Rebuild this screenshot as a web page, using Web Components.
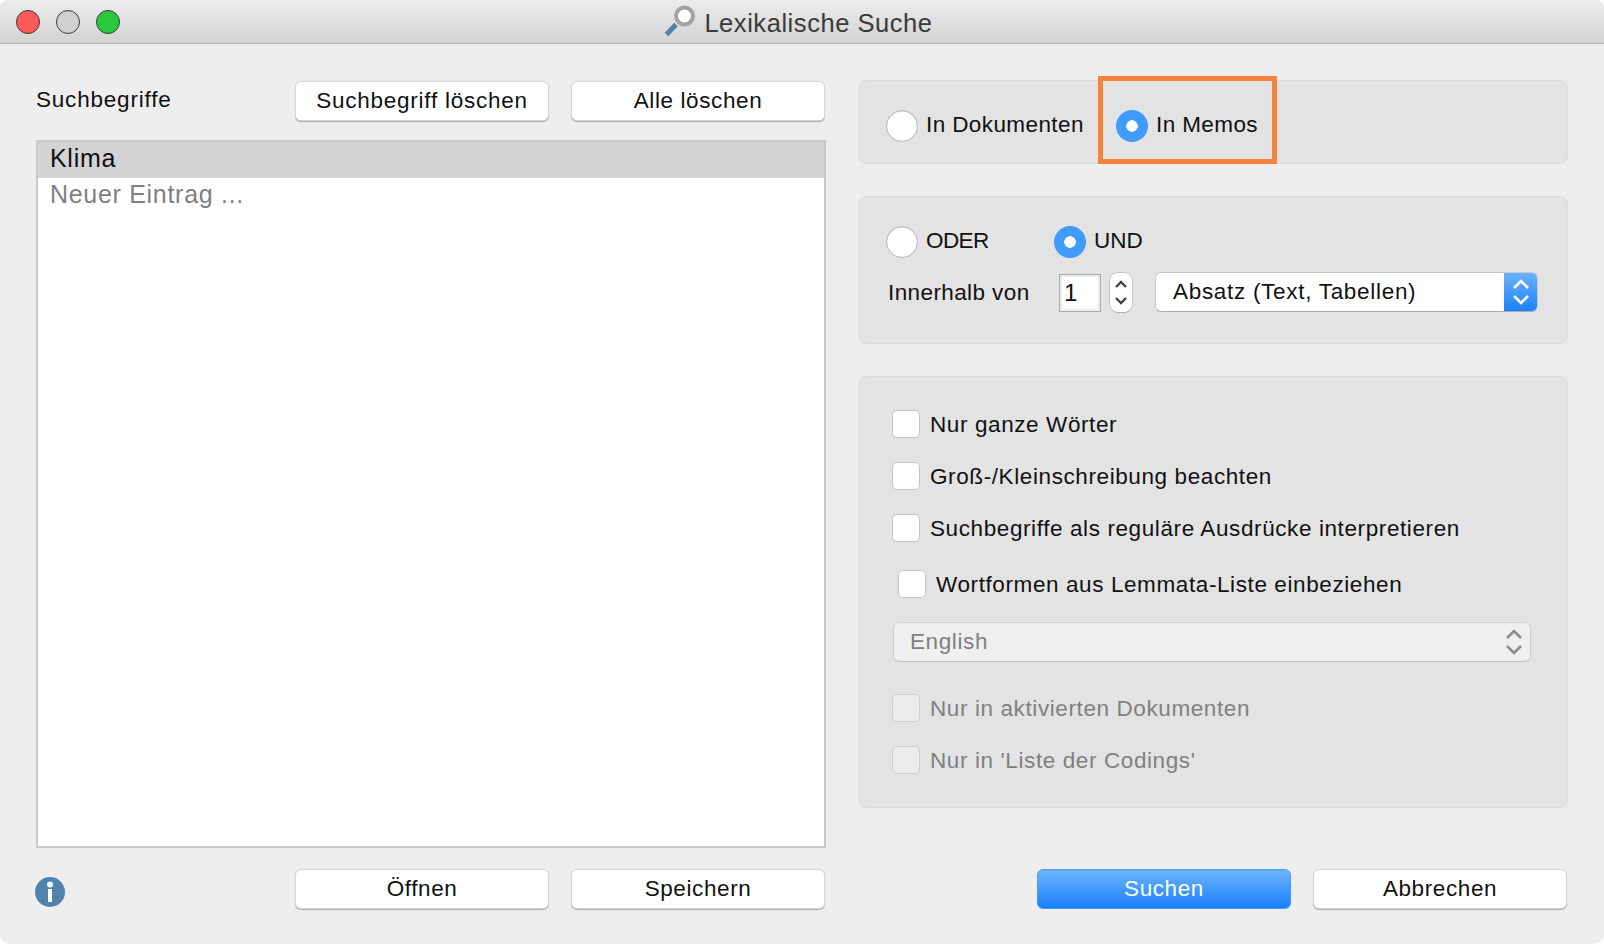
<!DOCTYPE html>
<html lang="de">
<head>
<meta charset="utf-8">
<title>Lexikalische Suche</title>
<style>
    html, body {
        margin: 0;
        height: 100%;
        overflow: hidden;
        background: #fff;
    }
    body {
        font-family: "Liberation Sans", Arial, sans-serif;
        font-size: 22.5px;
        letter-spacing: 0.6px;
        color: #111;
    }
</style>
</head>
<body>
<lex-search-dialog></lex-search-dialog>

<script>
// Small helper so every element is set up the same way
class ShadowElement extends HTMLElement {
    constructor() {
        super();
        this.attachShadow({ mode: 'open' });
        this.shadowRoot.innerHTML = this.markup();
    }
    markup() {
        return '<slot></slot>';
    }
}

class MacTitlebar extends ShadowElement {
    markup() {
        return `
        <style>
            :host {
                display: flex;
                align-items: center;
                justify-content: center;
                box-sizing: border-box;
                height: 44px;
                padding-right: 6px;
                gap: 8px;
                position: relative;
                background: linear-gradient(#ececec, #d3d3d3);
                border-bottom: 1px solid #b3b3b3;
                border-radius: 8px 8px 0 0;
                font-size: 25.5px;
                letter-spacing: 0.55px;
                color: #3a3a3a;
            }
            .lights {
                position: absolute;
                left: 16px;
                top: 10px;
                display: flex;
                gap: 16px;
            }
            .lights i {
                width: 24px;
                height: 24px;
                box-sizing: border-box;
                border-radius: 50%;
                border: 1px solid;
            }
            .close { background: #fc5b57; border-color: #e2463f; }
            .min { background: #d0d0d0; border-color: #c6c6c6; }
            .zoom { background: #2ac83f; border-color: #22b133; }
            svg { display: block; width: 32px; height: 32px; margin: -1px 0 0 -1px; }
            .label { padding-top: 3px; }
        </style>
        <div class="lights"><i class="close"></i><i class="min"></i><i class="zoom"></i></div>
        <svg viewBox="0 0 32 32">
            <path d="M2.5 29.5 L12 19.5" stroke="#4f83ad" stroke-width="5" fill="none"/>
            <circle cx="20.5" cy="11" r="8.5" fill="#fff" stroke="#a3a3a3" stroke-width="4"/>
        </svg>
        <span class="label"><slot></slot></span>
        `;
    }
}

class MacButton extends ShadowElement {
    markup() {
        return `
        <style>
            :host {
                display: flex;
                align-items: center;
                justify-content: center;
                box-sizing: border-box;
                width: 254px;
                height: 40px;
                background: #fff;
                border: 1px solid #d6d6d6;
                border-radius: 6px;
                box-shadow: 0 1px 1px #a8a8a8;
            }
            :host([primary]) {
                background: linear-gradient(#6db3fd, #1a7ffb);
                border-color: #4c9afc;
                color: #fff;
                box-shadow: none;
            }
        </style>
        <slot></slot>
        `;
    }
}

class MacRadio extends ShadowElement {
    markup() {
        return `
        <style>
            :host {
                display: flex;
                align-items: center;
                gap: 8px;
                letter-spacing: 0.4px;
            }
            .dot {
                flex: none;
                width: 32px;
                height: 32px;
                box-sizing: border-box;
                border-radius: 50%;
                background: #fff;
                border: 1px solid #b4b4b4;
                box-shadow: inset 0 1px 1px #e4e4e4;
            }
            :host([checked]) .dot {
                border: 0;
                box-shadow: none;
                background: radial-gradient(circle, #fff 0 5.5px, #3f9bff 6px);
            }
            .label { margin-top: -2px; }
        </style>
        <span class="dot"></span>
        <span class="label"><slot></slot></span>
        `;
    }
}

class MacCheck extends ShadowElement {
    markup() {
        return `
        <style>
            :host {
                display: flex;
                align-items: center;
                gap: 10px;
                height: 28px;
            }
            .box {
                flex: none;
                width: 28px;
                height: 28px;
                box-sizing: border-box;
                border-radius: 5px;
                background: #fff;
                border: 1px solid #c4c4c4;
            }
            .label { padding-top: 1px; }
            :host([disabled]) { color: #808080; }
            :host([disabled]) .box { background: #ececec; border-color: #cfcfcf; }
        </style>
        <span class="box"></span>
        <span class="label"><slot></slot></span>
        `;
    }
}

class MacSelect extends ShadowElement {
    markup() {
        return `
        <style>
            :host {
                display: flex;
                align-items: center;
                box-sizing: border-box;
                height: 40px;
                background: #fff;
                border: 1px solid #c9c9c9;
                border-bottom-color: #a9a9a9;
                border-radius: 6px;
                padding-left: 16px;
                overflow: hidden;
            }
            :host([disabled]) {
                background: #efefef;
                border-color: #d2d2d2;
                border-bottom-color: #c2c2c2;
                color: #808080;
            }
            .text { flex: 1; }
            .arrows {
                flex: none;
                align-self: stretch;
                width: 34px;
                margin: -1px -1px -1px 0;
                display: flex;
                align-items: center;
                justify-content: center;
                background: linear-gradient(#6db3fd, #1a7ffb);
                color: #fff;
            }
            :host([disabled]) .arrows { background: none; color: #8c8c8c; }
            svg { display: block; width: 18px; height: 30px; }
        </style>
        <span class="text"><slot></slot></span>
        <span class="arrows">
            <svg viewBox="0 0 18 30" fill="none" stroke="currentColor" stroke-width="2.6">
                <path d="M2 11 L9 4 L16 11"/>
                <path d="M2 19 L9 26 L16 19"/>
            </svg>
        </span>
        `;
    }
}

class MacStepper extends ShadowElement {
    markup() {
        return `
        <style>
            :host {
                display: flex;
                align-items: center;
                justify-content: center;
                box-sizing: border-box;
                width: 24px;
                height: 41px;
                background: #fff;
                border: 1px solid #c6c6c6;
                border-bottom-color: #adadad;
                border-radius: 9px;
            }
            svg { display: block; width: 14px; height: 31px; }
        </style>
        <svg viewBox="0 0 14 31" fill="none" stroke="#444" stroke-width="2.4">
            <path d="M2 10 L7 5 L12 10"/>
            <path d="M2 21 L7 26 L12 21"/>
        </svg>
        `;
    }
}

class MacNumberField extends ShadowElement {
    markup() {
        return `
        <style>
            :host {
                display: flex;
                align-items: center;
                box-sizing: border-box;
                width: 42px;
                height: 38px;
                padding-left: 4px;
                background: #fff;
                border: 1px solid #ababab;
                box-shadow: inset 0 0 0 2px #ececec;
                font-size: 24px;
            }
        </style>
        <slot></slot>
        `;
    }
}

class MacPanel extends ShadowElement {
    markup() {
        return `
        <style>
            :host {
                display: block;
                position: relative;
                box-sizing: border-box;
                background: #e3e3e3;
                border: 1px solid #dcdcdc;
                border-radius: 8px;
            }
        </style>
        <slot></slot>
        `;
    }
}

class TermList extends ShadowElement {
    markup() {
        return `
        <style>
            :host {
                display: block;
                flex: 1;
                box-sizing: border-box;
                background: #fff;
                border: 2px solid #c8c8c8;
                font-size: 25px;
                letter-spacing: 0.7px;
            }
            ::slotted(*) {
                display: flex;
                align-items: center;
                box-sizing: border-box;
                height: 36px;
                padding: 0 0 4px 12px;
            }
            ::slotted([selected]) { background: #d3d3d3; }
            ::slotted([placeholder]) { color: #808080; }
        </style>
        <slot></slot>
        `;
    }
}

class InfoIcon extends ShadowElement {
    markup() {
        return `
        <style>
            :host { display: block; width: 30px; height: 30px; }
            svg { display: block; width: 100%; height: 100%; }
        </style>
        <svg viewBox="0 0 30 30">
            <circle cx="15" cy="15" r="15" fill="#5082ae"/>
            <circle cx="15" cy="7.5" r="3" fill="#fff"/>
            <rect x="13" y="12" width="4" height="13" fill="#fff"/>
        </svg>
        `;
    }
}

class LexSearchDialog extends ShadowElement {
    markup() {
        return `
        <style>
            :host {
                display: flex;
                flex-direction: column;
                height: 100vh;
                background: #eee;
                border-radius: 8px 8px 10px 10px;
                overflow: hidden;
            }
            .content {
                flex: 1;
                min-height: 0;
                display: grid;
                grid-template-columns: 790px 1fr;
                column-gap: 32px;
                padding: 36px 36px 35px 36px;
            }
            .col { display: flex; flex-direction: column; min-height: 0; }
            .head {
                display: flex;
                align-items: center;
                margin-top: 1px;
                margin-bottom: 19px;
                padding-right: 1px;
            }
            .head span { flex: 1; margin-top: -2px; letter-spacing: 0.8px; }
            .head mac-button:first-of-type { letter-spacing: 0.75px; }
            .foot {
                display: flex;
                align-items: center;
                gap: 22px;
                margin-top: 21px;
                padding-right: 1px;
            }
            .foot .grow { flex: 1; }
            .foot info-icon { margin: 6px 0 0 -1px; }
            .right { gap: 32px; }
            .right .foot { margin-top: auto; gap: 22px; justify-content: flex-end; }

            .where {
                display: flex;
                align-items: center;
                height: 84px;
                padding: 7px 0 0 27px;
                box-sizing: border-box;
            }
            .where mac-radio:first-child { width: 230px; }
            .highlight {
                position: absolute;
                left: 239px;
                top: -5px;
                width: 179px;
                height: 88px;
                box-sizing: border-box;
                border: 5px solid #f5833c;
            }

            .logic { height: 148px; padding: 29px 29px 0 27px; box-sizing: border-box; }
            .logic .line { display: flex; align-items: center; }
            .logic mac-radio:first-child { width: 168px; letter-spacing: -0.6px; }
            .logic mac-radio[checked] { letter-spacing: 0; }
            .logic .line + .line { margin-top: 14px; }
            .logic .within { width: 171px; margin-left: 2px; letter-spacing: 0.4px; }
            .logic mac-stepper { margin: 0 22px 0 8px; }
            .logic mac-select { flex: 1; margin-top: -2px; letter-spacing: 0.7px; padding-left: 17px; }

            .options {
                height: 432px;
                padding: 33px 36px 0 33px;
                box-sizing: border-box;
                display: flex;
                flex-direction: column;
            }
            .options mac-check + mac-check { margin-top: 24px; }
            .options .lemma { margin: 28px 0 0 6px !important; }
            .options mac-select { margin: 24px 0 32px 1px; }
            .options mac-select + mac-check { margin-top: 0; }
        </style>
        <mac-titlebar>Lexikalische Suche</mac-titlebar>
        <div class="content">
            <div class="col">
                <div class="head">
                    <span>Suchbegriffe</span>
                    <mac-button>Suchbegriff löschen</mac-button>
                    <mac-button style="margin-left:22px">Alle löschen</mac-button>
                </div>
                <term-list>
                    <div selected>Klima</div>
                    <div placeholder>Neuer Eintrag ...</div>
                </term-list>
                <div class="foot">
                    <info-icon></info-icon>
                    <span class="grow"></span>
                    <mac-button>Öffnen</mac-button>
                    <mac-button>Speichern</mac-button>
                </div>
            </div>
            <div class="col right">
                <mac-panel class="where">
                    <mac-radio>In Dokumenten</mac-radio>
                    <mac-radio checked>In Memos</mac-radio>
                    <div class="highlight"></div>
                </mac-panel>
                <mac-panel class="logic">
                    <div class="line">
                        <mac-radio>ODER</mac-radio>
                        <mac-radio checked>UND</mac-radio>
                    </div>
                    <div class="line">
                        <span class="within">Innerhalb von</span>
                        <mac-number-field>1</mac-number-field>
                        <mac-stepper></mac-stepper>
                        <mac-select>Absatz (Text, Tabellen)</mac-select>
                    </div>
                </mac-panel>
                <mac-panel class="options">
                    <mac-check>Nur ganze Wörter</mac-check>
                    <mac-check>Groß-/Kleinschreibung beachten</mac-check>
                    <mac-check>Suchbegriffe als reguläre Ausdrücke interpretieren</mac-check>
                    <mac-check class="lemma">Wortformen aus Lemmata-Liste einbeziehen</mac-check>
                    <mac-select disabled>English</mac-select>
                    <mac-check disabled>Nur in aktivierten Dokumenten</mac-check>
                    <mac-check disabled>Nur in 'Liste der Codings'</mac-check>
                </mac-panel>
                <div class="foot">
                    <mac-button primary>Suchen</mac-button>
                    <mac-button>Abbrechen</mac-button>
                </div>
            </div>
        </div>
        `;
    }
}

customElements.define('mac-titlebar', MacTitlebar);
customElements.define('mac-button', MacButton);
customElements.define('mac-radio', MacRadio);
customElements.define('mac-check', MacCheck);
customElements.define('mac-select', MacSelect);
customElements.define('mac-stepper', MacStepper);
customElements.define('mac-number-field', MacNumberField);
customElements.define('mac-panel', MacPanel);
customElements.define('term-list', TermList);
customElements.define('info-icon', InfoIcon);
customElements.define('lex-search-dialog', LexSearchDialog);
</script>
</body>
</html>
